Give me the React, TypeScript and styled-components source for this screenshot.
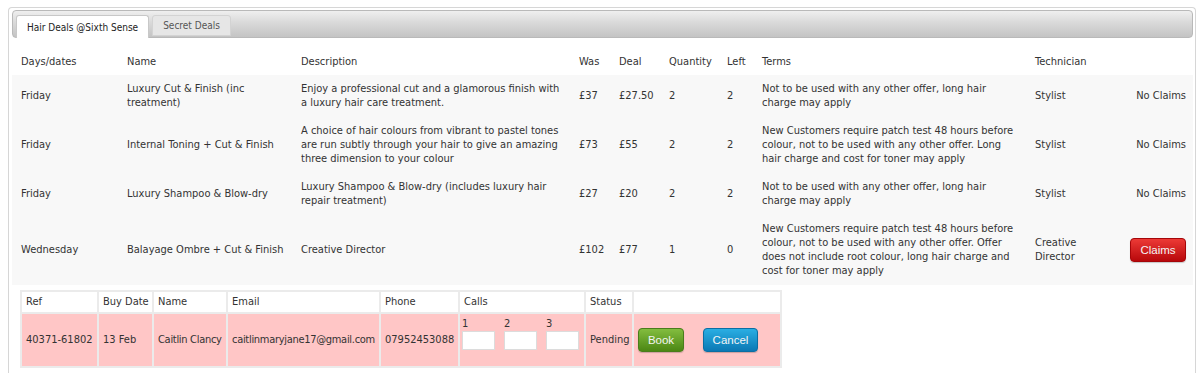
import React from 'react';
import styled, { createGlobalStyle } from 'styled-components';

const GlobalStyle = createGlobalStyle`
  html, body {
    margin: 0;
    padding: 0;
    background: #ffffff;
  }
  body {
    font-family: "DejaVu Sans Condensed", "DejaVu Sans", sans-serif;
    font-size: 11px;
    color: #333333;
  }
`;

const Widget = styled.div`
  margin: 7px 0 0 8px;
  width: 1188px;
  height: 380px;
  box-sizing: border-box;
  border: 1px solid #d6d6d6;
  border-bottom: none;
  border-radius: 4px 4px 0 0;
  padding: 2px 2px 0 3px;
`;

const TabNav = styled.ul`
  list-style: none;
  margin: 0;
  padding: 4px 3px 0 3px;
  height: 28px;
  box-sizing: border-box;
  display: flex;
  align-items: flex-end;
  gap: 3px;
  border: 1px solid #b9b9b9;
  border-radius: 4px;
  background: linear-gradient(to bottom, #efefef 0%, #d9d9d9 45%, #c4c4c4 100%);
`;

const Tab = styled.li<{ $active?: boolean }>`
  height: ${({ $active }) => ($active ? '23px' : '21px')};
  margin-bottom: ${({ $active }) => ($active ? '-1px' : '1px')};
  box-sizing: border-box;
  padding: 0 10px;
  display: flex;
  align-items: center;
  border: 1px solid ${({ $active }) => ($active ? '#c8c8c8' : '#d3d3d3')};
  border-bottom: ${({ $active }) => ($active ? 'none' : '1px solid #d3d3d3')};
  border-radius: 3px 3px 0 0;
  background: ${({ $active }) => ($active ? '#ffffff' : '#e6e6e6')};
  color: ${({ $active }) => ($active ? '#222222' : '#555555')};
  font-size: 10px;
  cursor: pointer;
`;

const Panel = styled.div`
  padding: 11px 0 0 0;
`;

const DealsTable = styled.table`
  width: 1181px;
  table-layout: fixed;
  border-collapse: collapse;
  line-height: 14px;
`;

const HeadCell = styled.th`
  font-weight: normal;
  text-align: left;
  padding: 6px 9px;
  background: #ffffff;
  vertical-align: middle;
`;

const BodyRow = styled.tr`
  background: #f8f8f8;
`;

const Cell = styled.td`
  padding: 7px 6px 7px 9px;
  text-align: left;
  vertical-align: middle;
`;

const ClaimsCell = styled.td`
  padding: 7px 7px 7px 0;
  text-align: right;
  vertical-align: middle;
`;

const NestCell = styled.td`
  padding: 5px 0 0 8px;
  background: #ffffff;
`;

const ClaimsTable = styled.table`
  width: 760px;
  table-layout: fixed;
  border-collapse: collapse;
  border: 2px solid #ebebeb;
  line-height: 14px;
`;

const ClaimsHead = styled.th`
  font-weight: normal;
  text-align: left;
  padding: 3px 4px;
  height: 14px;
  background: #ffffff;
  border: 2px solid #ebebeb;
  white-space: nowrap;
`;

const ClaimsData = styled.td<{ $tight?: boolean }>`
  padding: 4px 4px;
  height: 44px;
  background: #ffc6c6;
  border: 2px solid #ebebeb;
  vertical-align: middle;
  white-space: nowrap;
  letter-spacing: ${({ $tight }) => ($tight ? '-0.3px' : 'normal')};
`;

const CallsRow = styled.div`
  display: flex;
  gap: 9px;
  margin: -13px 0 0 -2px;
`;

const CallSlot = styled.label`
  display: flex;
  flex-direction: column;
  gap: 1px;
  line-height: 12px;
`;

const CallInput = styled.input`
  width: 33px;
  height: 19px;
  box-sizing: border-box;
  border: 1px solid #dcdcdc;
  background: #ffffff;
  padding: 0;
  margin: 0;
`;

const Actions = styled.div`
  display: flex;
  gap: 19px;
`;

const palettes = {
  red: { top: '#ec3a36', bottom: '#b8080b', border: '#a50609' },
  green: { top: '#83bd3f', bottom: '#4c8714', border: '#4a7d1c' },
  blue: { top: '#2aaee3', bottom: '#0b78b4', border: '#0b6ea3' },
};

const Button = styled.button<{ $tone: keyof typeof palettes; $w: number }>`
  width: ${({ $w }) => $w}px;
  height: 24px;
  border-radius: 4px;
  border: 1px solid ${({ $tone }) => palettes[$tone].border};
  background: linear-gradient(
    to bottom,
    ${({ $tone }) => palettes[$tone].top},
    ${({ $tone }) => palettes[$tone].bottom}
  );
  color: #f4f4f4;
  font-family: "Liberation Sans", Arial, sans-serif;
  font-size: 11.5px;
  padding: 0;
  box-shadow: 0 1px 1px rgba(0, 0, 0, 0.2);
  cursor: pointer;
`;

interface IDeal {
  day: string;
  name: string;
  description: string;
  was: string;
  deal: string;
  quantity: string;
  left: string;
  terms: string;
  technician: string;
  claims: boolean;
}

const deals: IDeal[] = [
  {
    day: 'Friday',
    name: 'Luxury Cut & Finish (inc treatment)',
    description: 'Enjoy a professional cut and a glamorous finish with a luxury hair care treatment.',
    was: '£37',
    deal: '£27.50',
    quantity: '2',
    left: '2',
    terms: 'Not to be used with any other offer, long hair charge may apply',
    technician: 'Stylist',
    claims: false,
  },
  {
    day: 'Friday',
    name: 'Internal Toning + Cut & Finish',
    description:
      'A choice of hair colours from vibrant to pastel tones are run subtly through your hair to give an amazing three dimension to your colour',
    was: '£73',
    deal: '£55',
    quantity: '2',
    left: '2',
    terms:
      'New Customers require patch test 48 hours before colour, not to be used with any other offer. Long hair charge and cost for toner may apply',
    technician: 'Stylist',
    claims: false,
  },
  {
    day: 'Friday',
    name: 'Luxury Shampoo & Blow-dry',
    description: 'Luxury Shampoo & Blow-dry (includes luxury hair repair treatment)',
    was: '£27',
    deal: '£20',
    quantity: '2',
    left: '2',
    terms: 'Not to be used with any other offer, long hair charge may apply',
    technician: 'Stylist',
    claims: false,
  },
  {
    day: 'Wednesday',
    name: 'Balayage Ombre + Cut & Finish',
    description: 'Creative Director',
    was: '£102',
    deal: '£77',
    quantity: '1',
    left: '0',
    terms:
      'New Customers require patch test 48 hours before colour, not to be used with any other offer. Offer does not include root colour, long hair charge and cost for toner may apply',
    technician: 'Creative Director',
    claims: true,
  },
];

const columns = [
  { label: 'Days/dates', width: 106 },
  { label: 'Name', width: 174 },
  { label: 'Description', width: 278 },
  { label: 'Was', width: 40 },
  { label: 'Deal', width: 50 },
  { label: 'Quantity', width: 58 },
  { label: 'Left', width: 35 },
  { label: 'Terms', width: 273 },
  { label: 'Technician', width: 84 },
  { label: '', width: 83 },
];

const claimColumns = [
  { label: 'Ref', width: 77 },
  { label: 'Buy Date', width: 55 },
  { label: 'Name', width: 74 },
  { label: 'Email', width: 153 },
  { label: 'Phone', width: 79 },
  { label: 'Calls', width: 126 },
  { label: 'Status', width: 48 },
  { label: '', width: 148 },
];

const ClaimDetails = (): JSX.Element => (
  <ClaimsTable>
    <colgroup>
      {claimColumns.map((c, i) => (
        <col key={i} style={{ width: c.width }} />
      ))}
    </colgroup>
    <thead>
      <tr>
        {claimColumns.map((c, i) => (
          <ClaimsHead key={i}>{c.label}</ClaimsHead>
        ))}
      </tr>
    </thead>
    <tbody>
      <tr>
        <ClaimsData>40371-61802</ClaimsData>
        <ClaimsData>13 Feb</ClaimsData>
        <ClaimsData $tight>Caitlin Clancy</ClaimsData>
        <ClaimsData $tight>caitlinmaryjane17@gmail.com</ClaimsData>
        <ClaimsData>07952453088</ClaimsData>
        <ClaimsData>
          <CallsRow>
            {['1', '2', '3'].map((n) => (
              <CallSlot key={n}>
                <span>{n}</span>
                <CallInput type="text" />
              </CallSlot>
            ))}
          </CallsRow>
        </ClaimsData>
        <ClaimsData>Pending</ClaimsData>
        <ClaimsData>
          <Actions>
            <Button $tone="green" $w={46}>
              Book
            </Button>
            <Button $tone="blue" $w={55}>
              Cancel
            </Button>
          </Actions>
        </ClaimsData>
      </tr>
    </tbody>
  </ClaimsTable>
);

const App = (): JSX.Element => {
  return (
    <>
      <GlobalStyle />
      <Widget>
        <TabNav>
          <Tab $active>Hair Deals @Sixth Sense</Tab>
          <Tab>Secret Deals</Tab>
        </TabNav>
        <Panel>
          <DealsTable>
            <colgroup>
              {columns.map((c, i) => (
                <col key={i} style={{ width: c.width }} />
              ))}
            </colgroup>
            <thead>
              <tr>
                {columns.map((c, i) => (
                  <HeadCell key={i}>{c.label}</HeadCell>
                ))}
              </tr>
            </thead>
            <tbody>
              {deals.map((d, i) => (
                <BodyRow key={i}>
                  <Cell>{d.day}</Cell>
                  <Cell>{d.name}</Cell>
                  <Cell>{d.description}</Cell>
                  <Cell>{d.was}</Cell>
                  <Cell>{d.deal}</Cell>
                  <Cell>{d.quantity}</Cell>
                  <Cell>{d.left}</Cell>
                  <Cell>{d.terms}</Cell>
                  <Cell>{d.technician}</Cell>
                  <ClaimsCell>
                    {d.claims ? (
                      <Button $tone="red" $w={56}>
                        Claims
                      </Button>
                    ) : (
                      'No Claims'
                    )}
                  </ClaimsCell>
                </BodyRow>
              ))}
              <tr>
                <NestCell colSpan={10}>
                  <ClaimDetails />
                </NestCell>
              </tr>
            </tbody>
          </DealsTable>
        </Panel>
      </Widget>
    </>
  );
};

export default App;
